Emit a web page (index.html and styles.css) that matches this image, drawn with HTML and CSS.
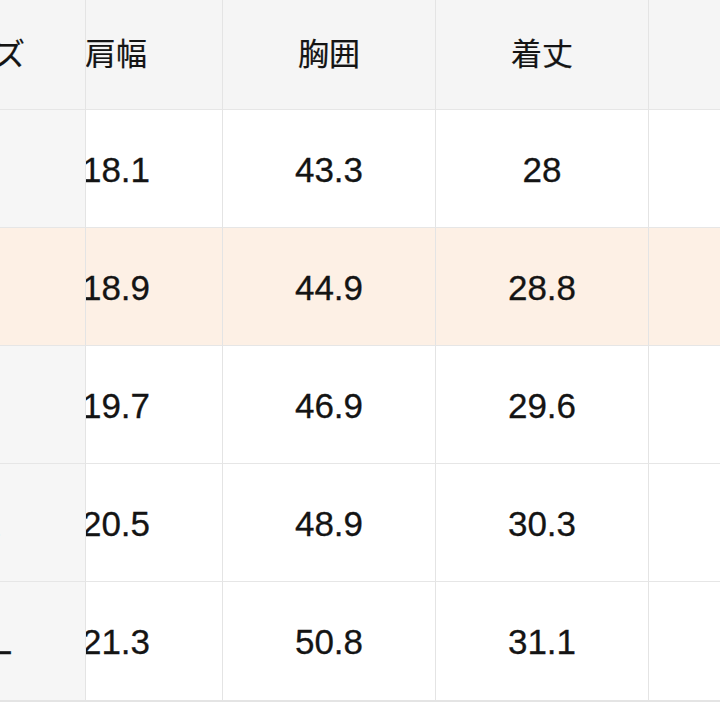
FILE: index.html
```html
<!DOCTYPE html>
<html lang="ja">
<head>
<meta charset="utf-8">
<title>サイズ表</title>
<link rel="stylesheet" href="styles.css">
</head>
<body>
<div class="viewport">
  <div class="size-table">
    <div class="row head">
      <div class="cell col1">サイズ</div>
      <div class="cell col2">肩幅</div>
      <div class="cell col3">胸囲</div>
      <div class="cell col4">着丈</div>
      <div class="cell col5">袖丈</div>
    </div>
    <div class="row">
      <div class="cell col1">S</div>
      <div class="cell col2">18.1</div>
      <div class="cell col3">43.3</div>
      <div class="cell col4">28</div>
      <div class="cell col5">14.5</div>
    </div>
    <div class="row hl">
      <div class="cell col1">M</div>
      <div class="cell col2">18.9</div>
      <div class="cell col3">44.9</div>
      <div class="cell col4">28.8</div>
      <div class="cell col5">15.2</div>
    </div>
    <div class="row">
      <div class="cell col1">L</div>
      <div class="cell col2">19.7</div>
      <div class="cell col3">46.9</div>
      <div class="cell col4">29.6</div>
      <div class="cell col5">15.9</div>
    </div>
    <div class="row">
      <div class="cell col1">XL</div>
      <div class="cell col2">20.5</div>
      <div class="cell col3">48.9</div>
      <div class="cell col4">30.3</div>
      <div class="cell col5">16.6</div>
    </div>
    <div class="row last">
      <div class="cell col1">XXL</div>
      <div class="cell col2">21.3</div>
      <div class="cell col3">50.8</div>
      <div class="cell col4">31.1</div>
      <div class="cell col5">17.3</div>
    </div>
  </div>
</div>
</body>
</html>
```

FILE: styles.css
```css
html, body {
  margin: 0;
  padding: 0;
  background: #ffffff;
}

.viewport {
  width: 720px;
  height: 720px;
  overflow: hidden;
}

.size-table {
  margin-left: -127px;
  width: max-content;
  font-family: "Liberation Sans", "Noto Sans CJK JP", sans-serif;
  font-size: 35px;
  color: #141414;
}

.row {
  display: grid;
  grid-template-columns: 137px 76px 137px 213px 213px 213px;
  grid-template-rows: 118px;
}

.row.head {
  grid-template-rows: 110px;
}

.row.last {
  grid-template-rows: 120px;
}

.cell {
  box-sizing: border-box;
  grid-row: 1;
  display: flex;
  align-items: center;
  justify-content: center;
  padding-top: 2px;
  background: #ffffff;
  border-right: 1px solid #e4e4e4;
  border-bottom: 1px solid #e6e6e6;
  white-space: nowrap;
  -webkit-text-stroke: 0.3px #141414;
}

.col1 {
  grid-column: 1 / 3;
  background: #f6f6f6;
  position: relative;
  z-index: 2;
}

.col2 { grid-column: 2 / 4; }
.col3 { grid-column: 4; }
.col4 { grid-column: 5; }
.col5 { grid-column: 6; }

.head .cell {
  background: #f5f5f5;
  padding-top: 0;
  padding-bottom: 6px;
  font-family: "Noto Sans CJK JP", sans-serif;
  font-size: 31px;
  -webkit-text-stroke: 0.2px #141414;
}

.hl .cell {
  background: #fdf0e5;
}

.last .cell {
  border-bottom: 2px solid #e4e4e4;
}
```
